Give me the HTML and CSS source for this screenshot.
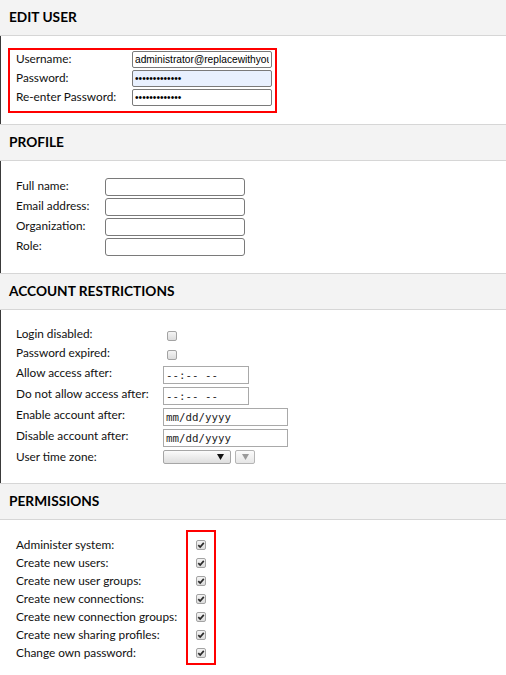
FILE: index.html
```html
<!DOCTYPE html>
<html lang="en">
<head>
<meta charset="utf-8">
<title>Edit User</title>
<link rel="stylesheet" href="styles.css">
</head>
<body>
<div class="page">
  <div class="upper">
    <section class="sec">
      <h2 class="sec-head first">EDIT USER</h2>
      <div class="sec-body body-user">
        <div class="boxed grid-user">
          <label class="lbl">Username:</label>
          <input class="in" type="text" value="administrator@replacewithyourdomain.com">
          <label class="lbl">Password:</label>
          <input class="in autofill" type="password" value="aaaaaaaaaaaaa">
          <label class="lbl">Re-enter Password:</label>
          <input class="in" type="password" value="aaaaaaaaaaaaa">
        </div>
      </div>
    </section>

    <section class="sec">
      <h2 class="sec-head">PROFILE</h2>
      <div class="sec-body body-profile">
        <div class="grid-profile">
          <label class="lbl">Full name:</label>
          <input class="in in-profile" type="text">
          <label class="lbl">Email address:</label>
          <input class="in in-profile" type="text">
          <label class="lbl">Organization:</label>
          <input class="in in-profile" type="text">
          <label class="lbl">Role:</label>
          <input class="in in-profile" type="text">
        </div>
      </div>
    </section>

    <section class="sec">
      <h2 class="sec-head">ACCOUNT RESTRICTIONS</h2>
      <div class="sec-body body-account">
        <div class="grid-account">
          <label class="lbl">Login disabled:</label>
          <div class="cell"><span class="cb cb-acc"></span></div>
          <label class="lbl">Password expired:</label>
          <div class="cell"><span class="cb cb-acc"></span></div>
          <label class="lbl">Allow access after:</label>
          <div class="cell"><span class="mono time">--:-- --</span></div>
          <label class="lbl">Do not allow access after:</label>
          <div class="cell"><span class="mono time">--:-- --</span></div>
          <label class="lbl">Enable account after:</label>
          <div class="cell"><span class="mono date">mm/dd/yyyy</span></div>
          <label class="lbl">Disable account after:</label>
          <div class="cell"><span class="mono date">mm/dd/yyyy</span></div>
          <label class="lbl">User time zone:</label>
          <div class="cell tz-cell">
            <span class="select">
              <svg class="tri" width="7" height="6" viewBox="0 0 7 6"><polygon points="0,0 7,0 3.5,6" fill="#111"/></svg>
            </span>
            <span class="select-btn">
              <svg class="tri" width="7" height="6" viewBox="0 0 7 6"><polygon points="0,0 7,0 3.5,6" fill="#9a9a9a"/></svg>
            </span>
          </div>
        </div>
      </div>
    </section>
  </div>

  <section class="sec">
    <h2 class="sec-head">PERMISSIONS</h2>
    <div class="sec-body body-perm">
      <div class="perm">
        <div class="perm-labels">
          <label class="lbl prow">Administer system:</label>
          <label class="lbl prow">Create new users:</label>
          <label class="lbl prow">Create new user groups:</label>
          <label class="lbl prow">Create new connections:</label>
          <label class="lbl prow">Create new connection groups:</label>
          <label class="lbl prow">Create new sharing profiles:</label>
          <label class="lbl prow">Change own password:</label>
        </div>
        <div class="perm-box">
          <div class="prow"><span class="cb on"><svg width="10" height="10" viewBox="0 0 10 10"><path d="M2.3 5.2 L4.2 7.1 L7.8 2.9" fill="none" stroke="#2b2b2b" stroke-width="1.7"/></svg></span></div>
          <div class="prow"><span class="cb on"><svg width="10" height="10" viewBox="0 0 10 10"><path d="M2.3 5.2 L4.2 7.1 L7.8 2.9" fill="none" stroke="#2b2b2b" stroke-width="1.7"/></svg></span></div>
          <div class="prow"><span class="cb on"><svg width="10" height="10" viewBox="0 0 10 10"><path d="M2.3 5.2 L4.2 7.1 L7.8 2.9" fill="none" stroke="#2b2b2b" stroke-width="1.7"/></svg></span></div>
          <div class="prow"><span class="cb on"><svg width="10" height="10" viewBox="0 0 10 10"><path d="M2.3 5.2 L4.2 7.1 L7.8 2.9" fill="none" stroke="#2b2b2b" stroke-width="1.7"/></svg></span></div>
          <div class="prow"><span class="cb on"><svg width="10" height="10" viewBox="0 0 10 10"><path d="M2.3 5.2 L4.2 7.1 L7.8 2.9" fill="none" stroke="#2b2b2b" stroke-width="1.7"/></svg></span></div>
          <div class="prow"><span class="cb on"><svg width="10" height="10" viewBox="0 0 10 10"><path d="M2.3 5.2 L4.2 7.1 L7.8 2.9" fill="none" stroke="#2b2b2b" stroke-width="1.7"/></svg></span></div>
          <div class="prow"><span class="cb on"><svg width="10" height="10" viewBox="0 0 10 10"><path d="M2.3 5.2 L4.2 7.1 L7.8 2.9" fill="none" stroke="#2b2b2b" stroke-width="1.7"/></svg></span></div>
        </div>
      </div>
    </div>
  </section>
</div>
</body>
</html>
```
FILE: styles.css
```css
html, body {
  margin: 0;
  padding: 0;
  background: #ffffff;
}
body {
  font-family: Lato, "Noto Sans", sans-serif;
  font-size: 11.8px;
  color: #111111;
}
.page {
  width: 506px;
  height: 675px;
  overflow: hidden;
}
.upper {
  box-shadow: inset 1px 0 0 #3a3a3a;
}
.sec-head {
  margin: 0;
  box-sizing: border-box;
  height: 37px;
  display: flex;
  align-items: center;
  padding-left: 9px;
  padding-bottom: 2px;
  background: #f3f3f3;
  border-top: 1px solid #d6d6d6;
  border-bottom: 1px solid #d6d6d6;
  font-size: 13.7px;
  font-weight: 700;
  color: #000;
}
.sec-head.first {
  border-top: none;
  height: 36px;
}
.lbl {
  box-sizing: border-box;
  display: flex;
  align-items: center;
  white-space: nowrap;
  padding-bottom: 2px;
}
.in {
  box-sizing: border-box;
  display: block;
  width: 140px;
  height: 17px;
  margin: 1px 0;
  padding: 0 2px;
  border: 1px solid #7a7a7a;
  border-radius: 2px;
  background: #fff;
  font-family: "Liberation Sans", Arial, sans-serif;
  font-size: 10.2px;
  color: #000;
  outline: none;
}
.in.autofill {
  background: #e8f0fe;
}

/* EDIT USER */
.body-user {
  padding: 12px 0 11px 8px;
}
.boxed {
  border: 2px solid #ff0000;
}
.grid-user {
  display: grid;
  width: max-content;
  grid-template-columns: 116px 140px;
  grid-auto-rows: 19px;
  padding: 0 3px 4px 6px;
}

/* PROFILE */
.body-profile {
  padding: 16px 0 16px 16px;
}
.grid-profile {
  display: grid;
  grid-template-columns: 89px 140px;
  grid-auto-rows: 20px;
}
.grid-profile .lbl {
  padding-bottom: 4px;
}
.in-profile {
  height: 18px;
  border-radius: 3px;
}

/* ACCOUNT RESTRICTIONS */
.body-account {
  padding: 16px 0 14px 16px;
}
.grid-account {
  display: grid;
  grid-template-columns: 147px auto;
  grid-template-rows: 19px 19px 21px 21px 21px 21px 21px;
}
.grid-account .lbl {
  padding-bottom: 4px;
}
.cell {
  display: flex;
  align-items: flex-start;
}
.cb {
  box-sizing: border-box;
  display: block;
  width: 10px;
  height: 10px;
  border: 1px solid #a3a3a3;
  border-radius: 2px;
  background: linear-gradient(#f4f4f4, #dcdcdc);
}
.cb svg {
  display: block;
  margin: -1px 0 0 -1px;
}
.cb-acc {
  margin: 5px 0 0 4px;
}
.mono {
  box-sizing: border-box;
  display: flex;
  align-items: center;
  height: 18px;
  margin-top: 2px;
  padding-left: 2px;
  border: 1px solid #a9a9a9;
  font-family: "DejaVu Sans Mono", monospace;
  font-size: 10.8px;
  color: #1e1e1e;
  white-space: pre;
}
.time {
  width: 86px;
}
.date {
  width: 125px;
}
.tz-cell {
  gap: 4px;
  padding-top: 2px;
}
.select {
  box-sizing: border-box;
  width: 68px;
  height: 14px;
  display: flex;
  align-items: center;
  justify-content: flex-end;
  padding-right: 6px;
  border: 1px solid #a6a6a6;
  border-radius: 2px;
  background: linear-gradient(#fbfbfb, #dedede);
}
.select-btn {
  box-sizing: border-box;
  width: 20px;
  height: 14px;
  display: flex;
  align-items: center;
  justify-content: center;
  border: 1px solid #b5b5b5;
  border-radius: 2px;
  background: linear-gradient(#fbfbfb, #e6e6e6);
}
.tri {
  display: block;
}

/* PERMISSIONS */
.body-perm {
  padding: 10px 0 9px 16px;
}
.perm {
  display: flex;
  align-items: flex-start;
}
.perm-labels {
  width: 170px;
  padding-top: 6px;
}
.prow {
  height: 18px;
}
.perm-box {
  border: 2px solid #ff0000;
  padding: 4px 8px 1px 8px;
}
.perm-box .prow {
  display: flex;
  align-items: flex-start;
}
.perm-box .cb {
  margin-top: 4px;
}
```
